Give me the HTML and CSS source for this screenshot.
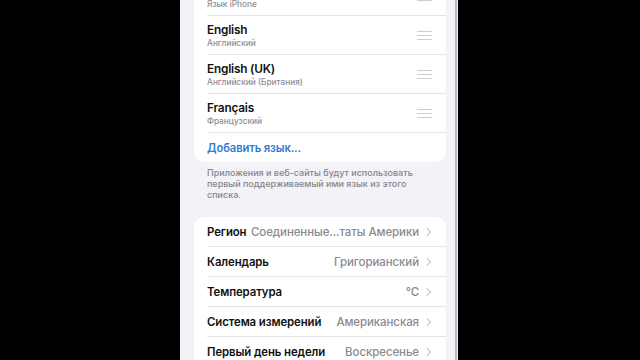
FILE: index.html
```html
<!DOCTYPE html>
<html lang="ru">
<head>
<meta charset="utf-8">
<link rel="stylesheet" href="styles.css">
</head>
<body>
<div class="phone">
  <div class="content">
    <div class="card langs">
      <div class="lang-row">
        <div class="lang-text">
          <div class="lang-title">Русский</div>
          <div class="lang-sub">Язык iPhone</div>
        </div>
        <span class="handle"></span>
      </div>
      <div class="lang-row">
        <div class="lang-text">
          <div class="lang-title">English</div>
          <div class="lang-sub">Английский</div>
        </div>
        <span class="handle"></span>
      </div>
      <div class="lang-row">
        <div class="lang-text">
          <div class="lang-title">English (UK)</div>
          <div class="lang-sub">Английский (Британия)</div>
        </div>
        <span class="handle"></span>
      </div>
      <div class="lang-row">
        <div class="lang-text">
          <div class="lang-title">Français</div>
          <div class="lang-sub">Французский</div>
        </div>
        <span class="handle"></span>
      </div>
      <div class="add-row">Добавить язык...</div>
    </div>
    <p class="footer">Приложения и веб-сайты будут использовать первый поддерживаемый ими язык из этого списка.</p>
    <div class="card settings">
      <div class="set-row"><span class="label">Регион</span><span class="value">Соединенные...таты Америки</span><span class="chev"></span></div>
      <div class="set-row"><span class="label">Календарь</span><span class="value">Григорианский</span><span class="chev"></span></div>
      <div class="set-row"><span class="label">Температура</span><span class="value">°C</span><span class="chev"></span></div>
      <div class="set-row"><span class="label">Система измерений</span><span class="value">Американская</span><span class="chev"></span></div>
      <div class="set-row"><span class="label">Первый день недели</span><span class="value">Воскресенье</span><span class="chev"></span></div>
    </div>
  </div>
  <div class="scrollbar"></div>
</div>
</body>
</html>
```

FILE: styles.css
```css
html, body {
  margin: 0;
  padding: 0;
  background: #000;
  width: 640px;
  height: 360px;
  overflow: hidden;
  font-family: Inter, "Noto Sans", sans-serif;
}
.phone {
  position: relative;
  margin-left: 180px;
  width: 278px;
  height: 360px;
  background: #f2f2f7;
  overflow: hidden;
}
.content {
  padding: 0 12px 0 14px;
}
.card {
  background: #fff;
  border-radius: 10px;
}
.langs {
  margin-top: -23px;
}
.lang-row {
  box-sizing: border-box;
  height: 39px;
  margin-left: 13px;
  padding-right: 14px;
  border-bottom: 1px solid #e4e4e8;
  display: flex;
  align-items: center;
  justify-content: space-between;
}
.lang-text {
  display: flex;
  flex-direction: column;
  gap: 1px;
}
.lang-title {
  font-size: 11.8px;
  font-weight: 600;
  color: #111;
  line-height: 14px;
  letter-spacing: -0.2px;
}
.lang-sub {
  font-size: 8.3px;
  font-weight: 500;
  color: #8e8e93;
  line-height: 10px;
}
.handle {
  width: 15px;
  height: 7px;
  border-top: 1px solid #cdcdd2;
  border-bottom: 1px solid #cdcdd2;
  position: relative;
  margin-top: 1px;
}
.handle::after {
  content: "";
  position: absolute;
  left: 0;
  right: 0;
  top: 3px;
  border-top: 1px solid #cdcdd2;
}
.add-row {
  height: 29px;
  margin-left: 13px;
  display: flex;
  align-items: center;
  font-size: 11.2px;
  font-weight: 600;
  color: #2f7bcf;
  letter-spacing: -0.1px;
}
.footer {
  margin: 5px 14px 0 13px;
  font-size: 9px;
  line-height: 11px;
  color: #86868b;
  font-weight: 500;
}
.settings {
  margin-top: 17px;
}
.set-row {
  box-sizing: border-box;
  height: 30px;
  margin-left: 13px;
  padding-right: 14px;
  border-bottom: 1px solid #e4e4e8;
  display: flex;
  align-items: center;
}
.set-row:last-child {
  border-bottom: none;
}
.label {
  font-size: 11.4px;
  font-weight: 600;
  color: #111;
  letter-spacing: -0.1px;
  white-space: nowrap;
}
.value {
  margin-left: auto;
  font-size: 11.5px;
  font-weight: 500;
  color: #8a8a8e;
  white-space: nowrap;
  letter-spacing: -0.1px;
}
.chev {
  width: 5px;
  height: 5px;
  border-top: 1.6px solid #c4c4c8;
  border-right: 1.6px solid #c4c4c8;
  transform: rotate(45deg);
  margin-left: 5px;
  margin-right: 2px;
}
.scrollbar {
  position: absolute;
  right: 1px;
  top: 0;
  width: 2px;
  height: 360px;
  background: #b9b9be;
}
```
